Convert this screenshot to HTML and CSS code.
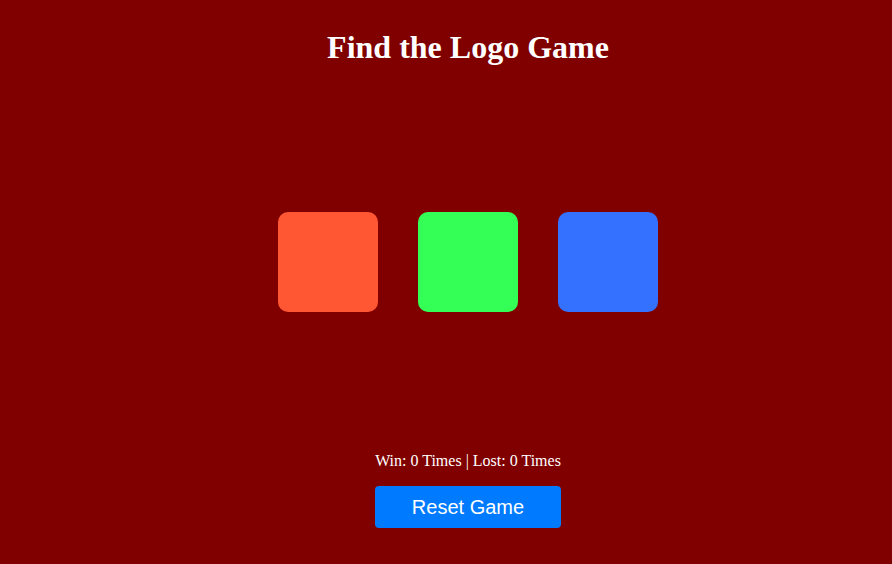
FILE: index.html
```html
<!DOCTYPE html>
<html lang="en">
<head>
    <meta charset="UTF-8">
    <meta name="viewport" content="width=device-width, initial-scale=1.0">
    <title>Find the Logo Game</title>
    <link rel="stylesheet" href="styles.css">
</head>
<body>
    <h1>Find the Logo Game</h1>

    <div class="board">
        <div class="box box-orange"></div>
        <div class="box box-green"></div>
        <div class="box box-blue"></div>
    </div>

    <p class="score">Win: <span id="wins">0</span> Times | Lost: <span id="losses">0</span> Times</p>

    <button id="reset-btn">Reset Game</button>
</body>
</html>
```

FILE: styles.css
```css
body {
    font-family: "Liberation Serif", "Times New Roman", serif;
    background-color: #800000;
    color: #ffffff;
    text-align: center;
    margin: 8px;
    padding-left: 44px;
}

h1 {
    font-size: 32px;
    margin: 21px 0;
}

.board {
    display: flex;
    justify-content: center;
    gap: 40px;
    margin: 146px 0 140px;
}

.box {
    width: 100px;
    height: 100px;
    border-radius: 10px;
    cursor: pointer;
}

.box-orange { background-color: #ff5733; }
.box-green { background-color: #33ff57; }
.box-blue { background-color: #3571ff; }

.score {
    font-size: 16px;
    margin: 16px 0;
}

button {
    font-family: "Liberation Sans", Arial, sans-serif;
    font-size: 20px;
    line-height: 22px;
    width: 186px;
    padding: 10px 0;
    background-color: #007bff;
    color: white;
    border: none;
    border-radius: 4px;
    cursor: pointer;
}
```
